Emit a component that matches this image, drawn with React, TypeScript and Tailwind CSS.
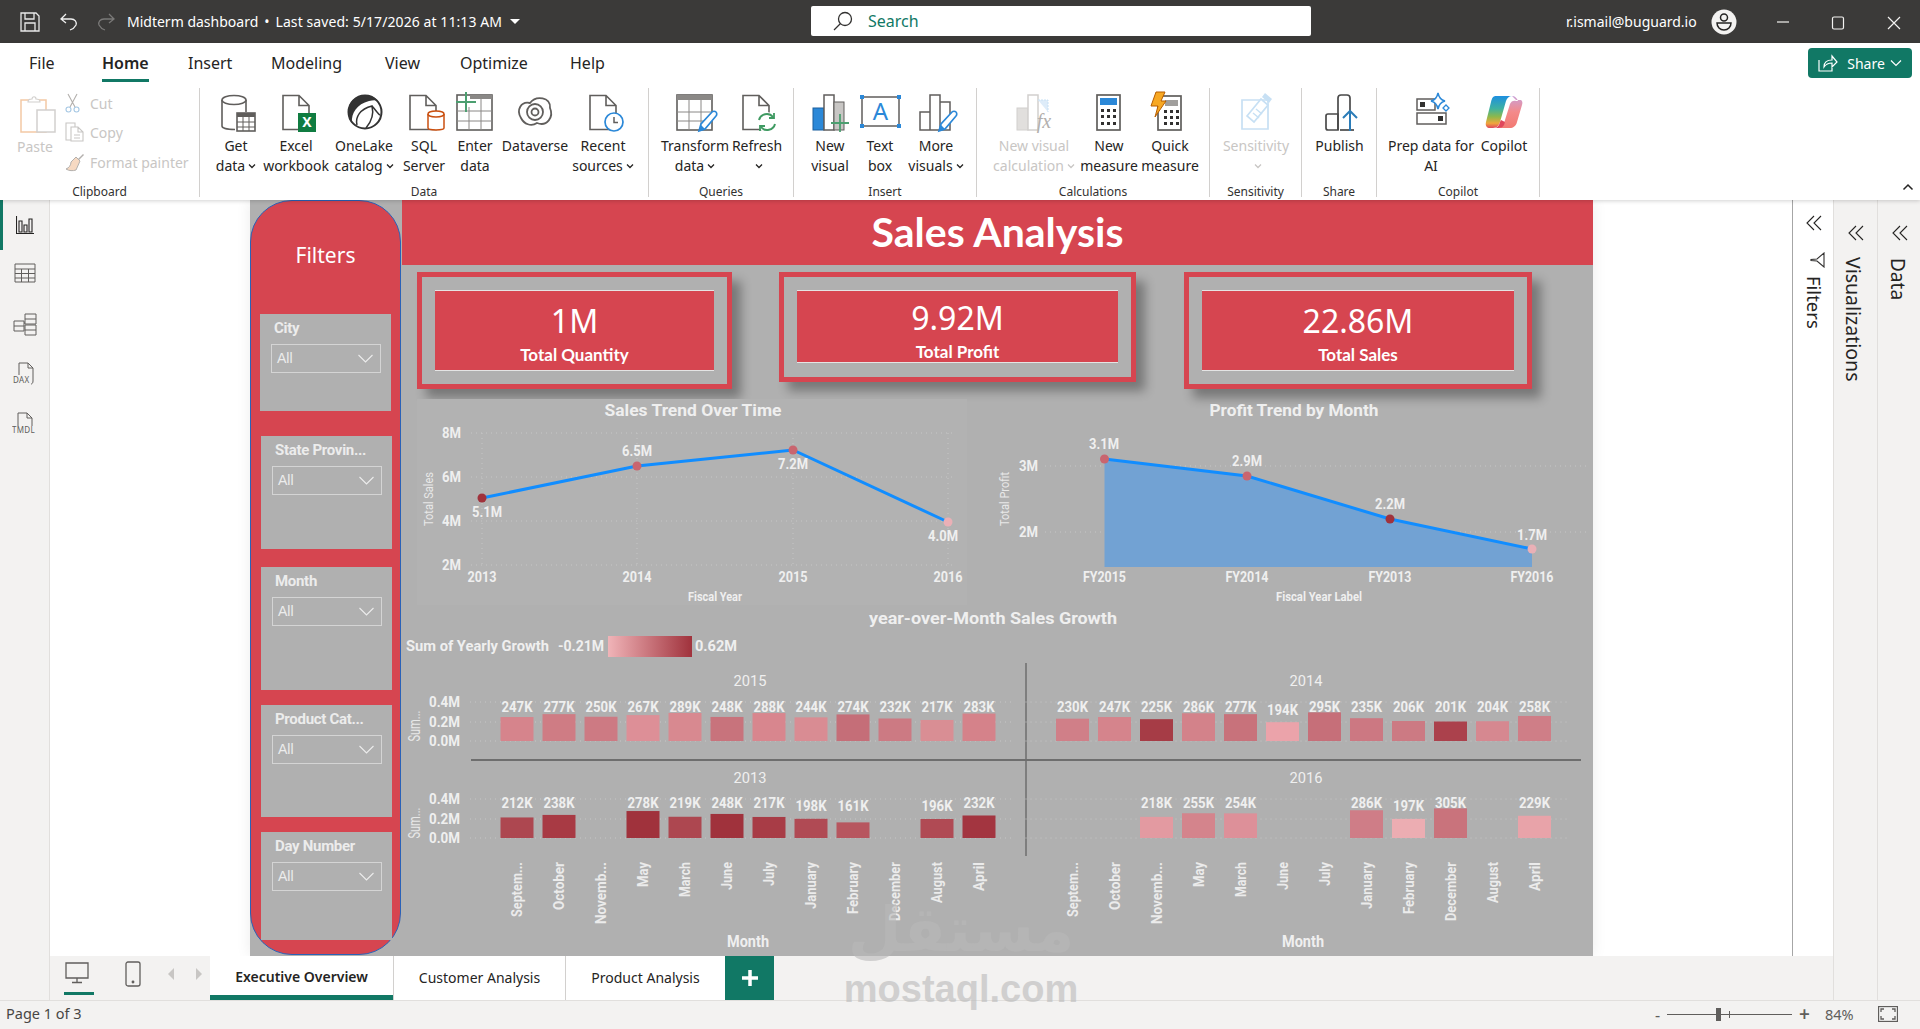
import React from 'react';

const PAGE = '#605e5c';

const Svg = ({ children }: { children: React.ReactNode }) => (
  <svg width="40" height="40" viewBox="0 0 40 40" fill="none" className="block overflow-visible">
    {children}
  </svg>
);

const Doc = ({ x = 7, w = 26, color = PAGE }: { x?: number; w?: number; color?: string }) => (
  <path
    d={`M${x} 3.5h${w - 10}l10 10v24h-${w}z M${x + w - 10} 3.5v10h10`}
    stroke={color}
    strokeWidth="1.6"
    fill="#fff"
  />
);

const Pencil = ({ x, y }: { x: number; y: number }) => (
  <g transform={`translate(${x} ${y})`}>
    <path d="M0 20l2-7L13 1c1-1 3-1 4 0s1 3 0 4L6 18z" fill="#fff" stroke="#2b88d8" strokeWidth="1.7" />
    <path d="M0 20l2-6 4 4z" fill="#2b88d8" />
  </g>
);

const icons: Record<string, React.ReactNode> = {
  getData: (
    <Svg>
      <path d="M6 8v26c0 2 5 3.500 13 3.500 M30 8v12" stroke={PAGE} strokeWidth="1.6" />
      <ellipse cx="18" cy="8" rx="12" ry="4.500" stroke={PAGE} strokeWidth="1.6" fill="#fff" />
      <rect x="21" y="21" width="18" height="18" fill="#fff" stroke={PAGE} strokeWidth="1.6" />
      <rect x="21" y="21" width="18" height="4" fill={PAGE} />
      <path d="M27 25v14M33 25v14M21 30h18M21 35h18" stroke={PAGE} />
    </Svg>
  ),
  excel: (
    <Svg>
      <Doc x={7} w={26} />
      <rect x="22" y="21" width="18" height="19" fill="#107c41" />
      <text x="31" y="35" fontSize="14" fontWeight="700" fill="#fff" textAnchor="middle">X</text>
    </Svg>
  ),
  onelake: (
    <Svg>
      <circle cx="21" cy="20" r="16.500" fill="#fff" stroke="#333" strokeWidth="2" />
      <path d="M21 3a17 17 0 0 0-13 28c-1-10 5-19 17-22 4-1 7-1 9 0A17 17 0 0 0 21 3z" fill="#333" />
      <path d="M13 33c-2-8 3-16 15-19 2 8 0 15-6 22M28 14c3 3 6 8 8 9" stroke="#333" strokeWidth="1.500" />
    </Svg>
  ),
  sql: (
    <Svg>
      <Doc x={6} w={26} />
      <path d="M24 22v14c0 2.500 16 2.500 16 0V22" fill="#fff" stroke="#ca5010" strokeWidth="1.500" />
      <ellipse cx="32" cy="22" rx="8" ry="3" fill="#fff" stroke="#ca5010" strokeWidth="1.500" />
    </Svg>
  ),
  enter: (
    <Svg>
      <rect x="2" y="3" width="35" height="35" fill="#fff" stroke={PAGE} strokeWidth="1.600" />
      <rect x="15" y="3" width="22" height="4" fill="#8a8886" />
      <path d="M14 15v23M26 7v31M2 19h35M2 29h35" stroke="#8a8886" />
      <path d="M11 0v20M1 10h20" stroke="#4c9f70" strokeWidth="2" />
    </Svg>
  ),
  dataverse: (
    <Svg>
      <path
        d="M6 26C1 18 6 9 15 11 21 3 36 5 35 16c4 9-3 19-13 15-6 4-13 1-16-5z"
        stroke={PAGE}
        strokeWidth="1.800"
      />
      <circle cx="20" cy="20" r="8" stroke={PAGE} strokeWidth="1.800" />
      <circle cx="20" cy="20" r="3.500" stroke={PAGE} strokeWidth="1.800" />
    </Svg>
  ),
  recent: (
    <Svg>
      <Doc x={7} w={26} />
      <circle cx="31" cy="30" r="9" fill="#fff" stroke="#2b88d8" strokeWidth="1.700" />
      <path d="M31 25v5.500h4" stroke={PAGE} strokeWidth="1.500" />
    </Svg>
  ),
  transform: (
    <Svg>
      <rect x="2" y="3" width="35" height="35" fill="#fff" stroke={PAGE} strokeWidth="1.600" />
      <rect x="2" y="3" width="35" height="5" fill="#8a8886" />
      <path d="M14 8v30M26 8v30M2 20h35M2 29h35" stroke="#8a8886" />
      <Pencil x={24} y={19} />
    </Svg>
  ),
  refresh: (
    <Svg>
      <Doc x={6} w={26} />
      <circle cx="30" cy="30" r="10" fill="#fff" />
      <path d="M22 28a8 8 0 0 1 14-3M38 32a8 8 0 0 1-14 3" stroke="#3f9a62" strokeWidth="2" />
      <path d="M37 21v5h-5M23 39v-5h5" stroke="#3f9a62" strokeWidth="1.800" />
    </Svg>
  ),
  newVisual: (
    <Svg>
      <rect x="3" y="16" width="11" height="22" fill="#2b88d8" stroke="#1b5f9e" />
      <rect x="14" y="3" width="10" height="35" fill="#fff" stroke={PAGE} strokeWidth="1.500" />
      <rect x="24" y="10" width="10" height="28" fill="#c8c6c4" stroke={PAGE} />
      <path d="M30 22v18M21 31h18" stroke="#4c9f70" strokeWidth="1.800" />
    </Svg>
  ),
  textBox: (
    <Svg>
      <rect x="2" y="5" width="37" height="29" stroke={PAGE} strokeWidth="1.500" />
      <path d="M0 3h4v4H0zM37 3h4v4h-4zM0 32h4v4H0zM37 32h4v4h-4z" fill="#2b88d8" />
      <text x="20.500" y="28" fontSize="24" fill="#2b88d8" textAnchor="middle">A</text>
    </Svg>
  ),
  moreVisuals: (
    <Svg>
      <path d="M4 20h10v18H4zM14 3h10v35H14zM24 10h10v28H24z" fill="#fff" stroke={PAGE} strokeWidth="1.500" />
      <Pencil x={23} y={19} />
    </Svg>
  ),
  visualCalc: (
    <Svg>
      <rect x="3" y="16" width="11" height="22" fill="#e1dfdd" stroke="#d2d0ce" />
      <rect x="14" y="3" width="10" height="35" fill="#fff" stroke="#d2d0ce" strokeWidth="1.500" />
      <path d="M24 8h10v12" fill="#deecf9" stroke="#c7e0f4" strokeDasharray="2 1" />
      <text x="30" y="36" fontSize="20" fontFamily="Liberation Serif, serif" fontStyle="italic" fill="#b3b0ad" textAnchor="middle">fx</text>
    </Svg>
  ),
  measure: (
    <Svg>
      <rect x="8" y="3" width="23" height="35" fill="#fff" stroke={PAGE} strokeWidth="1.700" />
      <rect x="11" y="6" width="17" height="7" fill="#2b88d8" />
      <path d="M12 17h3v3h-3zM18 17h3v3h-3zM24 17h3v3h-3zM12 23h3v3h-3zM18 23h3v3h-3zM24 23h3v3h-3zM12 30h3v3h-3zM18 30h3v3h-3zM24 30h3v3h-3z" fill="#323130" />
    </Svg>
  ),
  quick: (
    <Svg>
      <rect x="8" y="4" width="23" height="34" fill="#fff" stroke={PAGE} strokeWidth="1.700" />
      <rect x="15" y="8" width="13" height="6" fill="#a19f9d" />
      <path d="M14 18h3v3h-3zM20 18h3v3h-3zM26 18h3v3h-3zM14 24h3v3h-3zM20 24h3v3h-3zM26 24h3v3h-3zM14 30h3v3h-3zM20 30h3v3h-3zM26 30h3v3h-3z" fill="#323130" />
      <path d="M6 0h9l-4 9h5L5 25l3-11H1z" fill="#f7a823" stroke="#b75d00" />
    </Svg>
  ),
  sensitivity: (
    <Svg>
      <path d="M6 8h26v29H6z" stroke="#c7e0f4" strokeWidth="1.700" fill="#fff" />
      <path d="M11 24L25 7l7 6-14 17z" stroke="#c7e0f4" strokeWidth="1.700" fill="#fff" />
      <path d="M29 1l7 6-3 4-7-6z" fill="#c7e0f4" />
      <path d="M17 21l6 5M20 17l6 5" stroke="#c7e0f4" strokeWidth="1.500" />
    </Svg>
  ),
  publish: (
    <Svg>
      <path d="M6 24c0-1 1-2 2-2h10v16H8c-1 0-2-1-2-2z" stroke="#4a4a4a" strokeWidth="1.700" fill="#fff" />
      <path d="M18 38V6c0-2 1-3 3-3h6c2 0 3 1 3 3v32" stroke="#4a4a4a" strokeWidth="1.700" />
      <path d="M20 38h14" stroke="#4a4a4a" strokeWidth="1.700" />
      <path d="M30 39V19M23 26l7-7 7 7" stroke="#2b7cb8" strokeWidth="2" fill="none" />
    </Svg>
  ),
  prep: (
    <Svg>
      <rect x="6" y="7" width="18" height="11" stroke={PAGE} strokeWidth="1.500" />
      <rect x="9" y="10" width="5" height="5" fill="#323130" />
      <rect x="6" y="21" width="29" height="11" stroke={PAGE} strokeWidth="1.500" />
      <rect x="27" y="24" width="5" height="5" fill="#323130" />
      <path d="M27 1c1 5 3 7 7 8-4 1-6 3-7 8-1-5-3-7-7-8 4-1 6-3 7-8z" fill="#fff" stroke="#2b88d8" strokeWidth="1.500" />
      <path d="M35 13l3 3-3 3-3-3z" fill="#fff" stroke="#2b88d8" strokeWidth="1.300" />
    </Svg>
  ),
  copilot: (
    <Svg>
      <defs>
        <linearGradient id="cpl" x1="0" y1="0" x2="0" y2="1">
          <stop offset="0" stopColor="#1d8fe0" />
          <stop offset="0.4" stopColor="#3fb2a0" />
          <stop offset="0.65" stopColor="#8fb84a" />
          <stop offset="0.85" stopColor="#f0a63c" />
          <stop offset="1" stopColor="#e0475c" />
        </linearGradient>
        <linearGradient id="cpr" x1="0" y1="0" x2="0" y2="1">
          <stop offset="0" stopColor="#c9a0d8" />
          <stop offset="0.5" stopColor="#f48a8a" />
          <stop offset="1" stopColor="#f27a72" />
        </linearGradient>
      </defs>
      <path d="M12 4h16c-3 0-5 2-6 5l-6 21c-1 3-3 6-7 6H6c-3 0-5-2-4-6l5-20c1-4 2-6 5-6z" fill="url(#cpl)" />
      <path d="M28 4c3 0 5 2 6 5l-2 0c-2-1-5 0-6 3L21 28c-1 4-3 8-7 8h12c3 0 6-2 7-6l5-17c1-3 0-5-2-5h-4z" fill="url(#cpr)" />
      <path d="M10 36c3 0 5-2 6-6l1-2 4 2-1 3c-1 2-3 3-5 3z" fill="#e0475c" />
    </Svg>
  ),
};

type RibbonBtn = { icon: string; lines: string[]; w: number; caret?: boolean; off?: boolean };
type RibbonGroup = { label: string; w: number; pl: string; btns: RibbonBtn[] };

const groups: RibbonGroup[] = [
  {
    label: 'Data',
    w: 449,
    pl: 'pl-[5px]',
    btns: [
      { icon: 'getData', lines: ['Get', 'data'], w: 62, caret: true },
      { icon: 'excel', lines: ['Excel', 'workbook'], w: 58 },
      { icon: 'onelake', lines: ['OneLake', 'catalog'], w: 78, caret: true },
      { icon: 'sql', lines: ['SQL', 'Server'], w: 42 },
      { icon: 'enter', lines: ['Enter', 'data'], w: 60 },
      { icon: 'dataverse', lines: ['Dataverse'], w: 60 },
      { icon: 'recent', lines: ['Recent', 'sources'], w: 76, caret: true },
    ],
  },
  {
    label: 'Queries',
    w: 145,
    pl: 'pl-[10px]',
    btns: [
      { icon: 'transform', lines: ['Transform', 'data'], w: 72, caret: true },
      { icon: 'refresh', lines: ['Refresh', ''], w: 52, caret: true },
    ],
  },
  {
    label: 'Insert',
    w: 183,
    pl: 'pl-[6px]',
    btns: [
      { icon: 'newVisual', lines: ['New', 'visual'], w: 60 },
      { icon: 'textBox', lines: ['Text', 'box'], w: 40 },
      { icon: 'moreVisuals', lines: ['More', 'visuals'], w: 72, caret: true },
    ],
  },
  {
    label: 'Calculations',
    w: 233,
    pl: 'pl-[8px]',
    btns: [
      { icon: 'visualCalc', lines: ['New visual', 'calculation'], w: 98, caret: true, off: true },
      { icon: 'measure', lines: ['New', 'measure'], w: 52 },
      { icon: 'quick', lines: ['Quick', 'measure'], w: 70 },
    ],
  },
  {
    label: 'Sensitivity',
    w: 92,
    pl: 'pl-0',
    btns: [{ icon: 'sensitivity', lines: ['Sensitivity', ''], w: 92, caret: true, off: true }],
  },
  {
    label: 'Share',
    w: 75,
    pl: 'pl-0',
    btns: [{ icon: 'publish', lines: ['Publish'], w: 75 }],
  },
  {
    label: 'Copilot',
    w: 163,
    pl: 'pl-[13px]',
    btns: [
      { icon: 'prep', lines: ['Prep data for', 'AI'], w: 82 },
      { icon: 'copilot', lines: ['Copilot'], w: 64 },
    ],
  },
];

const Caret = () => (
  <svg width="8" height="8" viewBox="0 0 8 8" className="ml-[3px] inline-block">
    <path d="M1 2.500l3 3 3-3" fill="none" stroke="currentColor" strokeWidth="1.300" />
  </svg>
);

const TitleBar = () => (
  <div className="flex h-[43px] items-center bg-[#3b3a39] text-[14px] text-white">
    <svg width="20" height="20" viewBox="0 0 20 20" fill="none" className="ml-[20px]" stroke="#e8e8e8" strokeWidth="1.300">
      <path d="M1 1h15l3 3v15H1zM5 1v6h9V1M5 19v-8h10v8" />
    </svg>
    <svg width="18" height="18" viewBox="0 0 18 18" fill="none" className="ml-[20px]" stroke="#f0f0f0" strokeWidth="1.300">
      <path d="M6 1L1 6l5 4M1 6h10c4 0 6 3 5 6-1 2-3 4-6 5" />
    </svg>
    <svg width="18" height="18" viewBox="0 0 18 18" fill="none" className="ml-[19px]" stroke="#7a7978" strokeWidth="1.300">
      <path d="M12 1l5 5-5 4M17 6H7c-4 0-6 3-5 6 1 2 3 4 6 5" />
    </svg>
    <span className="ml-[12px] whitespace-nowrap">Midterm dashboard</span>
    <span className="mx-[6px]">•</span>
    <span className="whitespace-nowrap tracking-[0.08px]">Last saved: 5/17/2026 at 11:13 AM</span>
    <svg width="10" height="6" viewBox="0 0 10 6" className="absolute left-[510px] top-[19px]">
      <path d="M0 0h10L5 5z" fill="#fff" />
    </svg>
    <div className="absolute left-[811px] top-[6px] flex h-[30px] w-[500px] items-center rounded-[2px] bg-white pl-[22px]">
      <svg width="20" height="20" viewBox="0 0 20 20" fill="none" stroke="#323130" strokeWidth="1.300">
        <circle cx="12" cy="8" r="6.500" />
        <path d="M7.500 12.500L1 19" />
      </svg>
      <span className="ml-[15px] text-[16px] text-[#117865]">Search</span>
    </div>
    <span className="absolute left-[1566px] top-[11px] whitespace-nowrap">r.ismail@buguard.io</span>
    <svg width="26" height="26" viewBox="0 0 26 26" className="absolute left-[1711px] top-[9px]">
      <circle cx="13" cy="13" r="12.500" fill="#f3f2f1" />
      <circle cx="13" cy="8.500" r="3.500" fill="none" stroke="#252423" strokeWidth="1.500" />
      <path d="M6 14h14c0 4-3 7-7 7s-7-3-7-7z" fill="none" stroke="#252423" strokeWidth="1.500" />
    </svg>
    <svg width="14" height="14" viewBox="0 0 14 14" className="absolute left-[1776px] top-[15px]" stroke="#f3f2f1" fill="none" strokeWidth="1.200">
      <path d="M1 7h12" />
    </svg>
    <svg width="14" height="14" viewBox="0 0 14 14" className="absolute left-[1831px] top-[16px]" stroke="#f3f2f1" fill="none" strokeWidth="1.200">
      <rect x="1.500" y="1" width="11" height="12" rx="1.500" />
    </svg>
    <svg width="14" height="14" viewBox="0 0 14 14" className="absolute left-[1887px] top-[16px]" stroke="#f3f2f1" fill="none" strokeWidth="1.200">
      <path d="M1 1l12 12M13 1L1 13" />
    </svg>
  </div>
);

const Ribbon = () => {
  const tabs = [
    { t: 'File', w: 'w-[73px]' },
    { t: 'Home', w: 'w-[86px]' },
    { t: 'Insert', w: 'w-[83px]' },
    { t: 'Modeling', w: 'w-[114px]' },
    { t: 'View', w: 'w-[75px]' },
    { t: 'Optimize', w: 'w-[110px]' },
    { t: 'Help', w: 'w-[50px]' },
  ];
  return (
    <div className="relative z-10 h-[157px] bg-white text-[#252423] shadow-[0_1px_4px_rgba(0,0,0,0.18)]">
      <div className="flex h-[45px] pl-[29px] text-[16px]">
        {tabs.map((tab) => (
          <div key={tab.t} className={`${tab.w} pt-[8px]`}>
            {tab.t === 'Home' ? (
              <span className="inline-block border-b-[3px] border-[#117865] pb-[5px] font-semibold leading-[22px]">Home</span>
            ) : (
              <span className="inline-block leading-[22px]">{tab.t}</span>
            )}
          </div>
        ))}
        <button className="ml-auto mr-[8px] mt-[5px] flex h-[30px] w-[104px] items-center justify-center rounded-[4px] bg-[#117865] text-[14px] text-white">
          <svg width="20" height="18" viewBox="0 0 20 18" fill="none" stroke="#fff" strokeWidth="1.200" className="mr-[9px]">
            <path d="M1 6v11h13v-3M6 13c0-5 3-7 8-7V2l5 6-5 5V9c-4 0-6 1-8 4z" />
          </svg>
          Share
          <svg width="12" height="8" viewBox="0 0 12 8" fill="none" stroke="#fff" strokeWidth="1.200" className="ml-[5px]">
            <path d="M1 1.500l5 5 5-5" />
          </svg>
        </button>
      </div>
      <div className="flex h-[109px]">
        <div className="relative h-full w-[200px] border-r border-[#d2d0ce] text-[#c8c6c4]">
          <svg width="36" height="38" viewBox="0 0 36 38" fill="none" className="absolute left-[20px] top-[7px]">
            <rect x="1" y="5" width="25" height="32" fill="#fff" stroke="#f3c9a5" strokeWidth="1.500" />
            <path d="M8 7c0-3 3-3 4-3 0-3 4-3 4 0 2 0 4 1 4 3z" fill="#fff" stroke="#d2d0ce" strokeWidth="1.200" />
            <rect x="17" y="15" width="18" height="22" fill="#fff" stroke="#d2d0ce" strokeWidth="1.500" />
          </svg>
          <div className="absolute left-[17px] top-[49px] text-[14px] leading-[20px]">Paste</div>
          <div className="absolute left-[65px] top-[4px] flex h-[22px] items-center text-[14px]">
            <svg width="15" height="20" viewBox="0 0 15 20" fill="none" stroke="#b3b0ad" strokeWidth="1.100">
              <path d="M3 1l7 13M12 1L5 14" />
              <circle cx="3.500" cy="16.500" r="2.500" stroke="#a6c8e4" />
              <circle cx="11.500" cy="16.500" r="2.500" stroke="#a6c8e4" />
            </svg>
            <span className="ml-[10px]">Cut</span>
          </div>
          <div className="absolute left-[65px] top-[33px] flex h-[22px] items-center text-[14px]">
            <svg width="20" height="20" viewBox="0 0 20 20" fill="none" stroke="#c8c6c4" strokeWidth="1.100">
              <path d="M1 1h9v17H1z" fill="#fff" />
              <path d="M6 5h7l5 5v9H6zM13 5v5h5M9 13h6M9 16h6" fill="#fff" />
            </svg>
            <span className="ml-[5px]">Copy</span>
          </div>
          <div className="absolute left-[65px] top-[63px] flex h-[22px] items-center whitespace-nowrap text-[14px]">
            <svg width="20" height="20" viewBox="0 0 20 20" fill="none">
              <path d="M13 7l5-5 1 1-5 5z" fill="#b3b0ad" />
              <path d="M11 5l4 4-4 9c-3 1-7 1-10-1 3-1 5-4 5-7z" fill="#f6d9c2" stroke="#b3b0ad" />
            </svg>
            <span className="ml-[5px]">Format painter</span>
          </div>
          <div className="absolute inset-x-0 bottom-0 text-center text-[12px] leading-[10px] text-[#323130]">Clipboard</div>
        </div>
        {groups.map((g) => (
          <div key={g.label} style={{ width: g.w }} className="flex h-full shrink-0 flex-col border-r border-[#d2d0ce]">
            <div className={`flex flex-1 ${g.pl}`}>
              {g.btns.map((b) => (
                <div
                  key={b.icon}
                  style={{ width: b.w }}
                  className={`flex shrink-0 flex-col items-center pt-[4px] text-[14px] leading-[20px] ${b.off ? 'text-[#c8c6c4]' : ''}`}
                >
                  <div className="h-[40px] w-[40px]">{icons[b.icon]}</div>
                  <div className="mt-[4px] whitespace-nowrap">{b.lines[0]}</div>
                  {b.lines[1] !== undefined && (
                    <div className="flex h-[20px] items-center whitespace-nowrap">
                      {b.lines[1]}
                      {b.caret && <Caret />}
                    </div>
                  )}
                </div>
              ))}
            </div>
            <div className="text-center text-[12px] leading-[10px] text-[#323130]">{g.label}</div>
          </div>
        ))}
        <div className="flex flex-1 items-end justify-end pb-[6px] pr-[6px]">
          <svg width="12" height="8" viewBox="0 0 12 8" fill="none" stroke="#252423" strokeWidth="1.500">
            <path d="M1.500 6.500L6 2l4.500 4.500" />
          </svg>
        </div>
      </div>
    </div>
  );
};

const LeftRail = () => (
  <div className="relative flex w-[50px] shrink-0 flex-col items-center border-r border-[#e1dfdd] bg-[#f3f2f1]">
    <div className="absolute left-0 top-0 h-[50px] w-[3px] bg-[#117865]" />
    <div className="mt-[15px] flex h-[20px] items-center">
      <svg width="18" height="18" viewBox="0 0 18 18" fill="none" stroke="#252423" strokeWidth="1.100">
        <path d="M.5 0v17.500H18M3 5h3v11H3zM8 9h3v7H8zM13 3h3v13h-3z" />
      </svg>
    </div>
    <div className="mt-[28px] flex h-[20px] items-center">
      <svg width="22" height="20" viewBox="0 0 22 20" fill="none" stroke="#605e5c" strokeWidth="1">
        <path d="M1 1h20v18H1zM1 6h20M1 10.500h20M1 15h20M7.500 6v13M14.500 6v13" />
      </svg>
    </div>
    <div className="mt-[30px] flex h-[22px] items-center">
      <svg width="24" height="24" viewBox="0 0 24 24" fill="none" stroke="#605e5c" strokeWidth="1">
        <path d="M1 9h10v10H1zM1 14h10M12 2h11v10H12zM12 7h11M12 13h11v10H12zM12 18h11M11 11h1" />
      </svg>
    </div>
    <div className="mt-[26px] flex h-[24px] items-center">
      <svg width="24" height="24" viewBox="0 0 24 24" fill="none" stroke="#605e5c" strokeWidth="1">
        <path d="M6 14V2h9l5 5v13c0 2-1 3-2 3M15 2v5h5" />
        <text x="0" y="22" fontSize="8" fill="#605e5c" stroke="none" letterSpacing="0.300">DAX</text>
      </svg>
    </div>
    <div className="mt-[26px] flex h-[24px] items-center">
      <svg width="26" height="24" viewBox="0 0 26 24" fill="none" stroke="#605e5c" strokeWidth="1">
        <path d="M6 15V2h9l5 5v8M15 2v5h5" />
        <text x="0" y="22" fontSize="8" fill="#605e5c" stroke="none" letterSpacing="0.300">TMDL</text>
      </svg>
    </div>
  </div>
);

const slicers = [
  { title: 'City', h: 'h-[97px]', mt: 'mt-0', ml: 'ml-[9px]' },
  { title: 'State Provin...', h: 'h-[113px]', mt: 'mt-[25px]', ml: 'ml-[10px]' },
  { title: 'Month', h: 'h-[123px]', mt: 'mt-[18px]', ml: 'ml-[10px]' },
  { title: 'Product Cat...', h: 'h-[112px]', mt: 'mt-[15px]', ml: 'ml-[10px]' },
  { title: 'Day Number', h: 'h-[108px]', mt: 'mt-[15px]', ml: 'ml-[10px]' },
];

const FilterPanel = () => (
  <aside className="h-[755px] w-[151px] shrink-0 rounded-[42px] border border-[#2a62b8] bg-[#d64550]">
    <div className="h-[113px] pt-[38px] text-center text-[21px] leading-[32px] text-white">Filters</div>
    {slicers.map((s) => (
      <div key={s.title} className={`${s.h} ${s.mt} ${s.ml} w-[131px] bg-[#b0b0b0] pl-[11px] pr-[10px]`}>
        <div className="h-[30px] whitespace-nowrap pl-[3px] pt-[3px] font-['Roboto',sans-serif] text-[15px] font-bold leading-[22px] tracking-[-0.3px] text-[#ececec]">
          {s.title}
        </div>
        <div className="flex h-[29px] items-center justify-between border border-[#d4d4d4] pl-[5px] pr-[7px] font-['Liberation_Sans',sans-serif] text-[14px] text-[#ececec]">
          All
          <svg width="15" height="9" viewBox="0 0 15 9" fill="none" stroke="#ececec" strokeWidth="1.100">
            <path d="M.5 1l7 7 7-7" />
          </svg>
        </div>
      </div>
    ))}
  </aside>
);

const kpis = [
  { value: '1M', label: 'Total Quantity', w: 'w-[315px]', h: 'h-[117px]', inner: 'h-[81px]', ml: 'ml-0', valH: 'h-[54px] pt-[9px]' },
  { value: '9.92M', label: 'Total Profit', w: 'w-[357px]', h: 'h-[110px]', inner: 'h-[73px]', ml: 'ml-[47px]', valH: 'h-[51px] pt-[6px]' },
  { value: '22.86M', label: 'Total Sales', w: 'w-[348px]', h: 'h-[117px]', inner: 'h-[81px]', ml: 'ml-[48px]', valH: 'h-[54px] pt-[9px]' },
];

const KpiCard = ({ k }: { k: (typeof kpis)[number] }) => (
  <div className={`${k.w} ${k.h} ${k.ml} border-[5px] border-[#d64550] px-[13px] pt-[13px] shadow-[9px_9px_10px_rgba(0,0,0,0.32)]`}>
    <div className={`${k.inner} border-y border-[#e4e4e4] bg-[#d64550] text-center text-white`}>
      <div className={`${k.valH} text-[32px] leading-[42px]`}>{k.value}</div>
      <div className="font-['Lato',sans-serif] text-[17px] font-bold leading-[20px]">{k.label}</div>
    </div>
  </div>
);

const T = ({
  x,
  y,
  children,
  size = 15,
  weight = 700,
  anchor = 'middle',
  fill = '#efefef',
  rot,
  len,
}: {
  x: number;
  y: number;
  children: React.ReactNode;
  size?: number;
  weight?: number;
  anchor?: 'middle' | 'start' | 'end';
  fill?: string;
  rot?: boolean;
  len?: number;
}) => (
  <text
    x={x}
    y={y}
    fontSize={size}
    fontWeight={weight}
    fill={fill}
    textAnchor={anchor}
    dominantBaseline="central"
    textLength={len}
    lengthAdjust={len ? 'spacingAndGlyphs' : undefined}
    transform={rot ? `rotate(-90 ${x} ${y})` : undefined}
  >
    {children}
  </text>
);

const Grid = ({ x1, x2, y }: { x1: number; x2: number; y: number }) => (
  <line x1={x1} x2={x2} y1={y} y2={y} stroke="#c6c6c6" strokeWidth="1" strokeDasharray="1 4" />
);

const salesPts = [
  { x: 482, y: 498, c: '#a0323c', t: '5.1M', lx: 487, ly: 512 },
  { x: 637, y: 466, c: '#c9656f', t: '6.5M', lx: 637, ly: 451 },
  { x: 793, y: 450, c: '#c9656f', t: '7.2M', lx: 793, ly: 464 },
  { x: 948, y: 522, c: '#eab0b6', t: '4.0M', lx: 943, ly: 536 },
];
const profitPts = [
  { x: 1104.5, y: 459, c: '#c9656f', t: '3.1M', lx: 1104, ly: 444, a: 'FY2015' },
  { x: 1247, y: 476, c: '#c9656f', t: '2.9M', lx: 1247, ly: 461, a: 'FY2014' },
  { x: 1390, y: 519, c: '#a0323c', t: '2.2M', lx: 1390, ly: 504, a: 'FY2013' },
  { x: 1532, y: 549, c: '#eab0b6', t: '1.7M', lx: 1532, ly: 535, a: 'FY2016' },
];

const SalesChart = () => (
  <svg width="563" height="215" viewBox="417 395 563 215" className="shrink-0 font-['Roboto',sans-serif]">
    <rect x="417" y="399" width="550" height="206" fill="#b2b2b2" />
    <T x={693} y={410} size={17} len={177}>Sales Trend Over Time</T>
    {[433, 477, 521, 565].map((y) => (
      <Grid key={y} x1={471} x2={955} y={y} />
    ))}
    {salesPts.map((p) => (
      <line key={p.x} x1={p.x} x2={p.x} y1={433} y2={565} stroke="#c6c6c6" strokeDasharray="1 4" />
    ))}
    {['8M', '6M', '4M', '2M'].map((t, i) => (
      <T key={t} x={461} y={433 + i * 44} anchor="end" len={19}>{t}</T>
    ))}
    <polyline points={salesPts.map((p) => `${p.x},${p.y}`).join(' ')} fill="none" stroke="#118dff" strokeWidth="3" />
    {salesPts.map((p) => (
      <circle key={p.t} cx={p.x} cy={p.y} r="4.500" fill={p.c} />
    ))}
    {salesPts.map((p) => (
      <T key={p.t} x={p.lx} y={p.ly} len={30}>{p.t}</T>
    ))}
    {['2013', '2014', '2015', '2016'].map((t, i) => (
      <T key={t} x={salesPts[i].x} y={577} len={29}>{t}</T>
    ))}
    <T x={715} y={596} size={13} len={54}>Fiscal Year</T>
    <T x={428} y={499} size={13} weight={400} rot fill="#e8e8e8" len={54}>Total Sales</T>
  </svg>
);

const ProfitChart = () => (
  <svg width="613" height="215" viewBox="980 395 613 215" className="shrink-0 font-['Roboto',sans-serif]">
    <T x={1294} y={410} size={17} len={169}>Profit Trend by Month</T>
    {[466, 532].map((y) => (
      <Grid key={y} x1={1045} x2={1590} y={y} />
    ))}
    <T x={1038} y={466} anchor="end" len={19}>3M</T>
    <T x={1038} y={532} anchor="end" len={19}>2M</T>
    <polygon
      points={`1104.5,567 ${profitPts.map((p) => `${p.x},${p.y}`).join(' ')} 1532,567`}
      fill="#72a2d3"
    />
    <polyline points={profitPts.map((p) => `${p.x},${p.y}`).join(' ')} fill="none" stroke="#118dff" strokeWidth="3" />
    {profitPts.map((p) => (
      <circle key={p.t} cx={p.x} cy={p.y} r="4.500" fill={p.c} />
    ))}
    {profitPts.map((p) => (
      <T key={p.t} x={p.lx} y={p.ly} len={30}>{p.t}</T>
    ))}
    {profitPts.map((p) => (
      <T key={p.a} x={p.x} y={577} len={43}>{p.a}</T>
    ))}
    <T x={1319} y={596} size={13} len={86}>Fiscal Year Label</T>
    <T x={1004} y={499} size={13} weight={400} rot fill="#e8e8e8" len={54}>Total Profit</T>
  </svg>
);

const months = [
  { t: 'Septem...', len: 55 },
  { t: 'October', len: 48 },
  { t: 'Novemb...', len: 62 },
  { t: 'May', len: 25 },
  { t: 'March', len: 35 },
  { t: 'June', len: 28 },
  { t: 'July', len: 24 },
  { t: 'January', len: 47 },
  { t: 'February', len: 52 },
  { t: 'December', len: 59 },
  { t: 'August', len: 41 },
  { t: 'April', len: 29 },
];

const panels = [
  {
    year: '2015',
    cx: 750,
    x0: 517,
    base: 741,
    axis: true,
    ly: 707,
    v: [247, 277, 250, 267, 289, 248, 288, 244, 274, 232, 217, 283],
    c: ['#d6848c', '#cf7c84', '#cd7a83', '#dd8f97', '#d88990', '#c8737c', '#d8868e', '#d98c93', '#c56e78', '#cc7a83', '#d98e94', '#d5828a'],
  },
  {
    year: '2014',
    cx: 1306,
    x0: 1072.5,
    base: 741,
    axis: false,
    ly: 707,
    v: [230, 247, 225, 286, 277, 194, 295, 235, 206, 201, 204, 258],
    c: ['#d07f88', '#d5848c', '#a63c46', '#d3828a', '#c8727b', '#eba3aa', '#c66f79', '#cc7882', '#cc7a83', '#ab414c', '#d68890', '#cf7e87'],
  },
  {
    year: '2013',
    cx: 750,
    x0: 517,
    base: 838,
    axis: true,
    ly: 803,
    v: [212, 238, 0, 278, 219, 248, 217, 198, 161, 0, 196, 232],
    c: ['#ad4750', '#a83a44', '', '#a0323c', '#ad4750', '#a0323c', '#a83c46', '#b04a54', '#b7565f', '', '#b04a54', '#a33540'],
  },
  {
    year: '2016',
    cx: 1306,
    x0: 1072.5,
    base: 838,
    axis: false,
    ly: 803,
    v: [0, 0, 218, 255, 254, 0, 0, 286, 197, 305, 0, 229],
    c: ['', '', '#e39aa1', '#d4848c', '#dd9099', '', '', '#cf7d87', '#ecadb2', '#c9737c', '', '#e8a3a9'],
  },
];

const GrowthChart = () => (
  <svg width="1191" height="346" viewBox="402 610 1191 346" className="block font-['Roboto',sans-serif]">
    <defs>
      <linearGradient id="growth" x1="0" x2="1" y1="0" y2="0">
        <stop offset="0" stopColor="#f0b4b8" />
        <stop offset="1" stopColor="#a0323c" />
      </linearGradient>
    </defs>
    <T x={993} y={618} size={17} len={248}>year-over-Month Sales Growth</T>
    <T x={406} y={646} anchor="start" len={143}>Sum of Yearly Growth</T>
    <T x={558} y={646} anchor="start" len={46}>-0.21M</T>
    <rect x="608" y="636" width="84" height="21" fill="url(#growth)" />
    <T x={695} y={646} anchor="start" len={42}>0.62M</T>
    <line x1="1026" x2="1026" y1="663" y2="856" stroke="#6e6e6e" strokeWidth="1.500" />
    <line x1="471" x2="1581" y1="760" y2="760" stroke="#6e6e6e" strokeWidth="2" />
    {panels.map((p) => (
      <g key={p.year}>
        <T x={p.cx} y={p.base - 60} weight={400} len={33}>{p.year}</T>
        {[0, 19, 39].map((d) => (
          <Grid key={d} x1={p.x0 - 47} x2={p.x0 + 497} y={p.base - d} />
        ))}
        {p.axis && (
          <>
            {['0.0M', '0.2M', '0.4M'].map((t, i) => (
              <T key={t} x={460} y={p.base - i * 19.5} anchor="end" len={31}>{t}</T>
            ))}
            <T x={414} y={p.base - 15} size={17} weight={400} rot fill="#e8e8e8" len={31}>Sum...</T>
          </>
        )}
        {p.v.map((v, i) =>
          v ? (
            <g key={i}>
              <rect
                x={p.x0 + i * 42 - 16.5}
                y={p.base - v * 0.097}
                width="33"
                height={v * 0.097}
                fill={p.c[i]}
              />
              <T x={p.x0 + i * 42} y={v < 200 ? p.ly + 3 : p.ly} len={31}>{`${v}K`}</T>
            </g>
          ) : null
        )}
      </g>
    ))}
    {[517, 1072.5].map((x0) =>
      months.map((m, i) => (
        <text
          key={`${x0}-${m.t}`}
          x={x0 + i * 42}
          y={862}
          fontSize={15}
          fontWeight={700}
          fill="#ebebeb"
          textAnchor="end"
          dominantBaseline="central"
          textLength={m.len}
          lengthAdjust="spacingAndGlyphs"
          transform={`rotate(-90 ${x0 + i * 42} 862)`}
        >
          {m.t}
        </text>
      ))
    )}
    <T x={748} y={941} size={16} len={42}>Month</T>
    <T x={1303} y={941} size={16} len={42}>Month</T>
  </svg>
);

const Canvas = () => (
  <div className="flex h-[756px] w-[1343px] shrink-0 bg-[#b0b0b0] shadow-[0_0_14px_rgba(0,0,0,0.08)]">
    <FilterPanel />
    <div className="min-w-0 flex-1 pl-[1px]">
      <div className="flex h-[65px] items-center justify-center bg-[#d64550] pb-[1px] font-['Lato',sans-serif] text-[41px] font-bold text-white">
        Sales Analysis
      </div>
      <div className="mt-[7px] flex items-start pl-[15px]">
        {kpis.map((k) => (
          <KpiCard key={k.label} k={k} />
        ))}
      </div>
      <div className="mt-[6px] flex pl-[15px]">
        <SalesChart />
        <ProfitChart />
      </div>
      <GrowthChart />
    </div>
  </div>
);

const Chevrons = () => (
  <svg width="16" height="16" viewBox="0 0 16 16" fill="none" stroke="#252423" strokeWidth="1.100">
    <path d="M8 1L1 8l7 7M15 1L8 8l7 7" />
  </svg>
);

const PageTabs = () => (
  <div className="flex h-[44px] bg-[#f3f2f1] text-[14px] text-[#252423]">
    <div className="relative w-[160px] shrink-0">
      <svg width="24" height="22" viewBox="0 0 24 22" fill="none" stroke="#605e5c" strokeWidth="1.300" className="absolute left-[15px] top-[6px]">
        <path d="M1 1h22v15H1zM12 16v4M7 20.500h10" />
      </svg>
      <div className="absolute left-[14px] top-[36px] h-[3px] w-[30px] bg-[#117865]" />
      <svg width="16" height="26" viewBox="0 0 16 26" fill="none" stroke="#605e5c" strokeWidth="1.300" className="absolute left-[75px] top-[5px]">
        <rect x="1" y="1" width="14" height="24" rx="2" />
        <circle cx="8" cy="21" r="0.800" fill="#605e5c" />
      </svg>
      <svg width="6" height="12" viewBox="0 0 6 12" className="absolute left-[118px] top-[12px]">
        <path d="M6 0v12L0 6z" fill="#c8c6c4" />
      </svg>
      <svg width="6" height="12" viewBox="0 0 6 12" className="absolute left-[146px] top-[12px]">
        <path d="M0 0v12l6-6z" fill="#c8c6c4" />
      </svg>
    </div>
    <div className="flex w-[183px] items-center justify-center border-b-[5px] border-[#117865] bg-white pt-[2px] font-semibold">Executive Overview</div>
    <div className="flex w-[172px] items-center justify-center border-l border-[#d2d0ce] bg-white pb-[2px]">Customer Analysis</div>
    <div className="flex w-[160px] items-center justify-center border-l border-[#d2d0ce] bg-white pb-[2px]">Product Analysis</div>
    <div className="flex w-[49px] items-center justify-center bg-[#117865] text-white">
      <svg width="16" height="16" viewBox="0 0 16 16" stroke="#fff" strokeWidth="3.500">
        <path d="M8 0v16M0 8h16" />
      </svg>
    </div>
  </div>
);

export default function App() {
  return (
    <div className="relative flex h-[1029px] w-[1920px] flex-col overflow-hidden bg-white font-['Noto_Sans',sans-serif]">
      <TitleBar />
      <Ribbon />
      <div className="flex h-[800px]">
        <LeftRail />
        <div className="flex w-[1783px] shrink-0 flex-col">
          <div className="flex h-[756px]">
            <div className="w-[1742px] shrink-0 pl-[200px]">
              <Canvas />
            </div>
            <div className="relative w-[41px] shrink-0 border-l border-[#a6a6a6] bg-white text-[#252423]">
              <div className="absolute left-[13px] top-[15px]"><Chevrons /></div>
              <svg width="15" height="16" viewBox="0 0 15 16" fill="none" stroke="#323130" strokeWidth="1.100" className="absolute left-[17px] top-[52px]">
                <path d="M14 1v14L7 9 1 8.500V7.500L7 7z" />
              </svg>
              <div className="absolute left-[9px] top-[76px] text-[18.5px] leading-[24px] [writing-mode:vertical-rl]">Filters</div>
            </div>
          </div>
          <PageTabs />
        </div>
        <div className="relative w-[44px] shrink-0 border-l border-[#e1dfdd] bg-[#f3f2f1] text-[#252423]">
          <div className="absolute left-[14px] top-[25px]"><Chevrons /></div>
          <div className="absolute left-[7px] top-[57px] text-[19.5px] leading-[24px] [writing-mode:vertical-rl]">Visualizations</div>
        </div>
        <div className="relative w-[43px] shrink-0 border-l border-[#e1dfdd] bg-[#f3f2f1] text-[#252423]">
          <div className="absolute left-[14px] top-[25px]"><Chevrons /></div>
          <div className="absolute left-[8px] top-[58px] text-[19px] leading-[24px] [writing-mode:vertical-rl]">Data</div>
        </div>
      </div>
      <div className="flex flex-1 items-center border-t border-[#e1dfdd] bg-[#f3f2f1] pb-[2px] pl-[6px] text-[14.5px] text-[#484644]">
        <span className="flex-1">Page 1 of 3</span>
        <div className="relative -mt-[2px] h-full w-[265px] text-[#605e5c]">
          <div className="absolute left-0 top-[5px] text-[16px] leading-[20px]">-</div>
          <div className="absolute left-[12px] top-[14px] h-[1px] w-[125px] bg-[#605e5c]" />
          <div className="absolute left-[61px] top-[8px] h-[13px] w-[5px] bg-[#605e5c]" />
          <div className="absolute left-[74px] top-[11px] h-[7px] w-[1px] bg-[#605e5c]" />
          <div className="absolute left-[144px] top-[2px] text-[19px] font-semibold leading-[24px]">+</div>
          <div className="absolute left-[170px] top-[4px] leading-[20px]">84%</div>
          <svg width="20" height="16" viewBox="0 0 20 16" fill="none" stroke="#605e5c" strokeWidth="1.300" className="absolute left-[223px] top-[6px]">
            <rect x="0.500" y="0.500" width="19" height="15" />
            <path d="M3 6V3h3M17 6V3h-3M3 10v3h3M17 10v3h-3" />
          </svg>
        </div>
      </div>
      {/* watermark of the site the shot came from */}
      <div className="pointer-events-none absolute left-[845px] top-[892px] flex w-[232px] flex-col items-center text-[#b9b9b9] opacity-60">
        <div className="font-['DejaVu_Sans',sans-serif] text-[62px] font-bold leading-[76px]">مستقل</div>
        <div className="font-['Liberation_Sans',sans-serif] text-[38px] font-bold leading-[42px]">mostaql.com</div>
      </div>
    </div>
  );
}
